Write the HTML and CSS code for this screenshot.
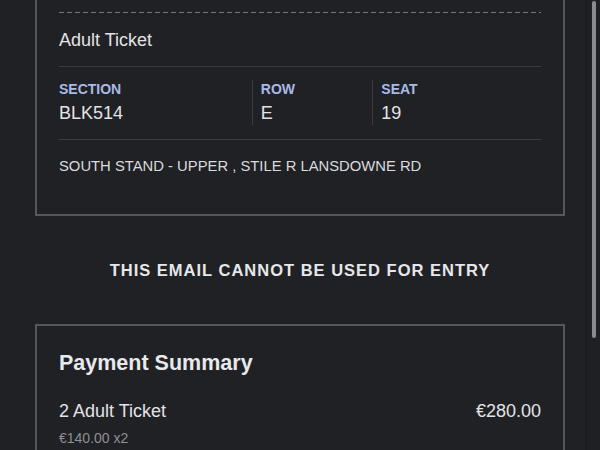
FILE: index.html
```html
<!DOCTYPE html>
<html lang="en">
<head>
<meta charset="utf-8">
<title>Ticket</title>
<link rel="stylesheet" href="styles.css">
</head>
<body>
<main class="page">
  <section class="card ticket">
    <div class="dashed"></div>
    <div class="ticket-type">Adult Ticket</div>
    <div class="info-row">
      <div class="col col-section">
        <div class="label">SECTION</div>
        <div class="value">BLK514</div>
      </div>
      <div class="col col-row">
        <div class="label">ROW</div>
        <div class="value">E</div>
      </div>
      <div class="col col-seat">
        <div class="label">SEAT</div>
        <div class="value">19</div>
      </div>
    </div>
    <div class="location">SOUTH STAND - UPPER , STILE R LANSDOWNE RD</div>
  </section>

  <h2 class="notice">THIS EMAIL CANNOT BE USED FOR ENTRY</h2>

  <section class="card payment">
    <h3 class="pay-title">Payment Summary</h3>
    <div class="line-item">
      <span class="item-name">2 Adult Ticket</span>
      <span class="item-price">€280.00</span>
    </div>
    <div class="item-sub">€140.00 x2</div>
  </section>
</main>
<div class="scrollbar"><div class="thumb"></div></div>
</body>
</html>
```
FILE: styles.css
```css
html, body {
  margin: 0;
  padding: 0;
  background: #202124;
  height: 450px;
  overflow: hidden;
}
body {
  font-family: "Liberation Sans", Arial, sans-serif;
  color: #e3e3e6;
  position: relative;
}
.page {
  display: flex;
  flex-direction: column;
}
.card {
  margin: 0 35px;
  border: 2px solid #55575b;
  padding: 0 22px;
}
.ticket {
  border-top: none;
  padding-top: 12px;
  padding-bottom: 39px;
}
.dashed {
  height: 1px;
  background: repeating-linear-gradient(to right, #74767a 0 5px, transparent 5px 8px);
}
.ticket-type {
  font-size: 18px;
  line-height: 22px;
  padding: 16px 0 15px;
  border-bottom: 1px solid #3a3b3f;
}
.info-row {
  display: flex;
  padding: 13px 0 14px;
  border-bottom: 1px solid #3a3b3f;
}
.col {
  padding: 1px 0;
  box-sizing: border-box;
}
.col-section { width: 40%; }
.col-row { width: 25%; border-left: 1px solid #3a3b3f; padding-left: 8px; }
.col-seat { width: 35%; border-left: 1px solid #3a3b3f; padding-left: 8px; }
.label {
  font-size: 14px;
  font-weight: bold;
  line-height: 17px;
  color: #a9bae4;
}
.value {
  font-size: 18px;
  line-height: 22px;
  margin-top: 4px;
}
.location {
  font-size: 14.8px;
  line-height: 18px;
  padding-top: 17px;
  color: #dadbde;
}
.notice {
  margin: 44px 0;
  text-align: center;
  font-size: 16.5px;
  line-height: 20px;
  letter-spacing: 1px;
  font-weight: bold;
  color: #e6e7ea;
}
.payment {
  padding-top: 24px;
  padding-bottom: 20px;
}
.pay-title {
  margin: 0;
  font-size: 21.5px;
  line-height: 26px;
  font-weight: bold;
  color: #e8e9ec;
}
.line-item {
  margin-top: 24px;
  display: flex;
  justify-content: space-between;
  font-size: 18px;
  line-height: 22px;
}
.item-sub {
  margin-top: 7px;
  font-size: 14px;
  line-height: 18px;
  color: #8d8f94;
}
.scrollbar {
  position: absolute;
  top: 0;
  right: 0;
  width: 13px;
  height: 450px;
  border-left: 1px solid #18191b;
  background: #1f2023;
}
.thumb {
  margin: 1px 0 0 5px;
  width: 4px;
  height: 337px;
  border-radius: 2px;
  background: #8a8b8f;
}
```
